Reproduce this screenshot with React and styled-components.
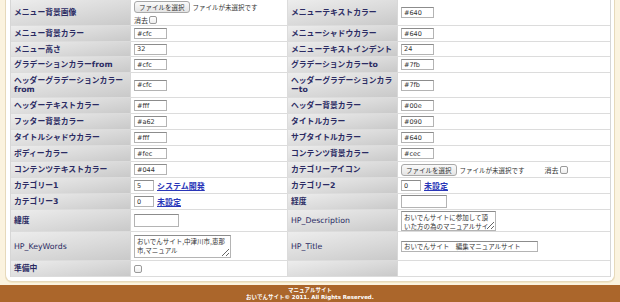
import React from "react";
import styled, { createGlobalStyle } from "styled-components";

const GlobalStyle = createGlobalStyle`
  html, body {
    margin: 0;
    padding: 0;
    background: #fbf3df;
  }
  body {
    font-family: "DejaVu Sans", "Noto Sans CJK JP", sans-serif;
  }
`;

const rows = [
  { h: 26, l: "メニュー背景画像", lv: { file: true, clear: "below" }, r: "メニューテキストカラー", rv: { text: "#640" } },
  { h: 16, l: "メニュー背景カラー", lv: { text: "#cfc" }, r: "メニューシャドウカラー", rv: { text: "#640" } },
  { h: 15, l: "メニュー高さ", lv: { text: "32" }, r: "メニューテキストインデント", rv: { text: "24" } },
  { h: 16, l: "グラデーションカラーfrom", lv: { text: "#cfc" }, r: "グラデーションカラーto", rv: { text: "#7fb" } },
  { h: 25, l: "ヘッダーグラデーションカラーfrom", lv: { text: "#cfc" }, r: "ヘッダーグラデーションカラーto", rv: { text: "#7fb" } },
  { h: 16, l: "ヘッダーテキストカラー", lv: { text: "#fff" }, r: "ヘッダー背景カラー", rv: { text: "#00e" } },
  { h: 16, l: "フッター背景カラー", lv: { text: "#a62" }, r: "タイトルカラー", rv: { text: "#090" } },
  { h: 16, l: "タイトルシャドウカラー", lv: { text: "#fff" }, r: "サブタイトルカラー", rv: { text: "#640" } },
  { h: 16, l: "ボディーカラー", lv: { text: "#fec" }, r: "コンテンツ背景カラー", rv: { text: "#cec" } },
  { h: 16, l: "コンテンツテキストカラー", lv: { text: "#044" }, r: "カテゴリーアイコン", rv: { file: true, clear: "inline" } },
  { h: 16, l: "カテゴリー1", lv: { num: "5", link: "システム開発" }, r: "カテゴリー2", rv: { num: "0", link: "未設定" } },
  { h: 16, l: "カテゴリー3", lv: { num: "0", link: "未設定" }, r: "経度", rv: { text: "", w: 46, tall: true } },
  { h: 22, l: "緯度", lv: { text: "", w: 45, tall: true }, r: "HP_Description", plain: true, rv: { area: "おいでんサイトに参加して頂いた方の為のマニュアルサイト", w: 95, ah: 20 } },
  { h: 29, l: "HP_KeyWords", lplain: true, lv: { area: "おいでんサイト,中津川市,恵那市,マニュアル", w: 97, ah: 23 }, r: "HP_Title", plain: true, rv: { text: "おいでんサイト　編集マニュアルサイト", w: 137 } },
  { h: 16, l: "準備中", lv: { check: true }, r: "", rv: {} },
];

const Value = ({ v }) => {
  if (v.file) {
    return (
      <FileWrap $inline={v.clear === "inline"}>
        <FileLine>
          <FileButton>ファイルを選択</FileButton>
          <Note>ファイルが未選択です</Note>
        </FileLine>
        <Clear>消去<Check /></Clear>
      </FileWrap>
    );
  }
  if (v.link) {
    return (
      <Inline>
        <TextInput $w={20} readOnly value={v.num} />
        <Anchor href="#">{v.link}</Anchor>
      </Inline>
    );
  }
  if (v.area) {
    return <Area $w={v.w} $h={v.ah} readOnly value={v.area} />;
  }
  if (v.check) return <Check />;
  if (v.text !== undefined) {
    return <TextInput $w={v.w || 33} $tall={v.tall} readOnly value={v.text} />;
  }
  return null;
};

export default function App() {
  return (
    <>
      <GlobalStyle />
      <Page>
        <Panel>
          <Table>
            {rows.map((row, i) => (
              <Row key={i} $h={row.h}>
                <Label $plain={row.lplain}>{row.l}</Label>
                <Cell><Value v={row.lv} /></Cell>
                <Label $plain={row.plain}>{row.r}</Label>
                <Cell $last><Value v={row.rv} /></Cell>
              </Row>
            ))}
          </Table>
        </Panel>
        <Footer>
          <div>マニュアルサイト</div>
          <div>おいでんサイト© 2011. All Rights Reserved.</div>
        </Footer>
      </Page>
    </>
  );
}

const Page = styled.div`
  width: 620px;
  height: 302px;
  overflow: hidden;
  display: flex;
  flex-direction: column;
`;

const Panel = styled.div`
  margin: 0 5px;
  padding: 0 3px 4px 4px;
  background: #fff;
  border: 1px solid #e6d9bb;
  border-top: none;
  border-radius: 0 0 7px 7px;
  box-shadow: 0 1px 0 #f3e6c6;
`;

const Table = styled.div`
  display: flex;
  flex-direction: column;
  border-left: 1px solid #d6d6d6;
  border-right: 1px solid #d6d6d6;
`;

const Row = styled.div`
  display: grid;
  grid-template-columns: 120px 157px 110px 1fr;
  height: ${(p) => p.$h}px;
  border-bottom: 1px solid #dcdcdc;
  box-sizing: border-box;
`;

const Label = styled.div`
  display: flex;
  align-items: center;
  padding: 0 3px;
  background: linear-gradient(170deg, #ededed 0%, #dadada 55%, #c9c9c9 100%);
  border-right: 1px solid #d8d8d8;
  color: #2b2b63;
  font-size: 7.8px;
  line-height: 9px;
  font-weight: ${(p) => (p.$plain ? 400 : 700)};
  overflow: hidden;
`;

const Cell = styled.div`
  display: flex;
  align-items: center;
  padding: 0 3px;
  border-right: ${(p) => (p.$last ? "none" : "1px solid #dcdcdc")};
  background: #fff;
  overflow: hidden;
`;

const TextInput = styled.input`
  box-sizing: border-box;
  width: ${(p) => p.$w}px;
  height: ${(p) => (p.$tall ? 13 : 11)}px;
  margin: 0;
  padding: 0 2px;
  border: 1px solid #b4b4b4;
  border-top-color: #8c8c8c;
  background: #fff;
  font-family: "DejaVu Sans", "Noto Sans CJK JP", sans-serif;
  font-size: 6.5px;
  color: #333;
  outline: none;
`;

const Area = styled.textarea`
  box-sizing: border-box;
  width: ${(p) => p.$w}px;
  height: ${(p) => p.$h}px;
  margin: 0;
  padding: 1px 2px;
  border: 1px solid #b4b4b4;
  border-top-color: #8c8c8c;
  font-family: "Noto Sans CJK JP", sans-serif;
  font-size: 6.5px;
  line-height: 9px;
  color: #333;
  overflow: hidden;
  resize: both;
  outline: none;
`;

const Inline = styled.div`
  display: flex;
  align-items: center;
  gap: 3px;
`;

const Anchor = styled.a`
  color: #2a36b8;
  font-size: 8px;
  font-weight: 700;
  font-family: "Noto Sans CJK JP", sans-serif;
  text-decoration: underline;
`;

const FileWrap = styled.div`
  display: flex;
  flex-direction: ${(p) => (p.$inline ? "row" : "column")};
  align-items: ${(p) => (p.$inline ? "center" : "flex-start")};
  gap: ${(p) => (p.$inline ? "20px" : "2px")};
`;

const FileLine = styled.div`
  display: flex;
  align-items: center;
  gap: 3px;
`;

const FileButton = styled.span`
  display: inline-block;
  padding: 0 4px;
  height: 10px;
  line-height: 10px;
  border: 1px solid #a8a8a8;
  border-radius: 3px;
  background: linear-gradient(#fafafa, #e4e4e4);
  font-family: "Noto Sans CJK JP", sans-serif;
  font-size: 6.5px;
  color: #333;
`;

const Note = styled.span`
  font-family: "Noto Sans CJK JP", sans-serif;
  font-size: 6.5px;
  color: #333;
`;

const Clear = styled.span`
  display: flex;
  align-items: center;
  gap: 1px;
  font-family: "Noto Sans CJK JP", sans-serif;
  font-size: 7px;
  color: #333;
`;

const Check = styled.span`
  display: inline-block;
  width: 6px;
  height: 6px;
  border: 1px solid #9a9a9a;
  border-radius: 2px;
  background: linear-gradient(#fff, #eee);
`;

const Footer = styled.div`
  margin-top: 3px;
  flex: 1;
  background: #ab662b;
  color: #fff;
  font-family: "DejaVu Sans", "Noto Sans CJK JP", sans-serif;
  font-size: 5.5px;
  font-weight: 700;
  line-height: 7px;
  text-align: center;
  padding-top: 2px;
`;
